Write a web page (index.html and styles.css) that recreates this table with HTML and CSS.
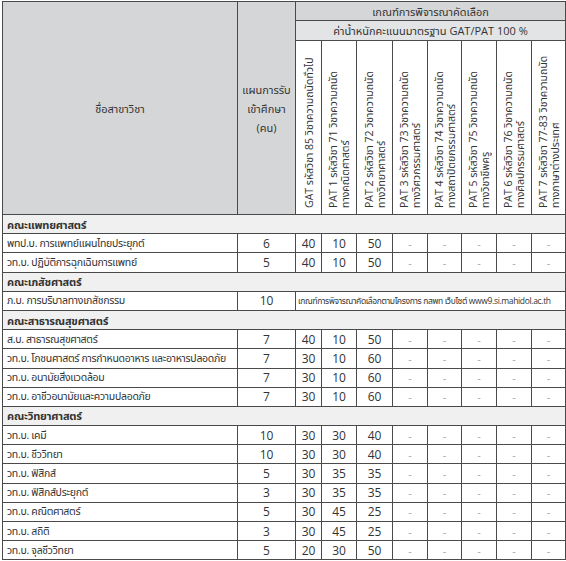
FILE: index.html
```html
<!DOCTYPE html>
<html lang="th">
<head>
<meta charset="utf-8">
<title>เกณฑ์การพิจารณาคัดเลือก</title>
<link rel="stylesheet" href="styles.css">
</head>
<body>
<table class="grid">
  <colgroup>
    <col class="c-name"><col class="c-plan"><col class="c-gat">
    <col class="c-p1"><col class="c-p2"><col class="c-p3"><col class="c-p4">
    <col class="c-p5"><col class="c-p6"><col class="c-p7">
  </colgroup>
  <thead>
    <tr class="h1">
      <th rowspan="3" class="hd">ชื่อสาขาวิชา</th>
      <th rowspan="3" class="hd plan">แผนการรับ<br>เข้าศึกษา<br>(คน)</th>
      <th colspan="8" class="hd">เกณฑ์การพิจารณาคัดเลือก</th>
    </tr>
    <tr class="h2">
      <th colspan="8" class="hd2">ค่าน้ำหนักคะแนนมาตรฐาน GAT/PAT 100 %</th>
    </tr>
    <tr class="h3">
      <th class="vert"><div class="vt">GAT รหัสวิชา 85 วิชาความถนัดทั่วไป</div></th>
      <th class="vert"><div class="vt">PAT 1 รหัสวิชา 71 วิชาความถนัด<br>ทางคณิตศาสตร์</div></th>
      <th class="vert"><div class="vt">PAT 2 รหัสวิชา 72 วิชาความถนัด<br>ทางวิทยาศาสตร์</div></th>
      <th class="vert"><div class="vt">PAT 3 รหัสวิชา 73 วิชาความถนัด<br>ทางวิศวกรรมศาสตร์</div></th>
      <th class="vert"><div class="vt">PAT 4 รหัสวิชา 74 วิชาความถนัด<br>ทางสถาปัตยกรรมศาสตร์</div></th>
      <th class="vert"><div class="vt">PAT 5 รหัสวิชา 75 วิชาความถนัด<br>ทางวิชาชีพครู</div></th>
      <th class="vert"><div class="vt">PAT 6 รหัสวิชา 76 วิชาความถนัด<br>ทางศิลปกรรมศาสตร์</div></th>
      <th class="vert"><div class="vt">PAT 7 รหัสวิชา 77-83 วิชาความถนัด<br>ทางภาษาต่างประเทศ</div></th>
    </tr>
  </thead>
  <tbody>
    <tr class="cat"><td colspan="10">คณะแพทยศาสตร์</td></tr>
    <tr><td class="nm">พทป.บ. การแพทย์แผนไทยประยุกต์</td><td class="n">6</td><td class="n">40</td><td class="n">10</td><td class="n">50</td><td class="d">-</td><td class="d">-</td><td class="d">-</td><td class="d">-</td><td class="d">-</td></tr>
    <tr><td class="nm">วท.บ. ปฏิบัติการฉุกเฉินการแพทย์</td><td class="n">5</td><td class="n">40</td><td class="n">10</td><td class="n">50</td><td class="d">-</td><td class="d">-</td><td class="d">-</td><td class="d">-</td><td class="d">-</td></tr>
    <tr class="cat"><td colspan="10">คณะเภสัชศาสตร์</td></tr>
    <tr><td class="nm">ภ.บ. การบริบาลทางเภสัชกรรม</td><td class="n">10</td><td colspan="8" class="note">เกณฑ์การพิจารณาคัดเลือกตามโครงการ กสพท เว็บไซต์ www9.si.mahidol.ac.th</td></tr>
    <tr class="cat"><td colspan="10">คณะสาธารณสุขศาสตร์</td></tr>
    <tr><td class="nm">ส.บ. สาธารณสุขศาสตร์</td><td class="n">7</td><td class="n">40</td><td class="n">10</td><td class="n">50</td><td class="d">-</td><td class="d">-</td><td class="d">-</td><td class="d">-</td><td class="d">-</td></tr>
    <tr><td class="nm">วท.บ. โภชนศาสตร์ การกำหนดอาหาร และอาหารปลอดภัย</td><td class="n">7</td><td class="n">30</td><td class="n">10</td><td class="n">60</td><td class="d">-</td><td class="d">-</td><td class="d">-</td><td class="d">-</td><td class="d">-</td></tr>
    <tr><td class="nm">วท.บ. อนามัยสิ่งแวดล้อม</td><td class="n">7</td><td class="n">30</td><td class="n">10</td><td class="n">60</td><td class="d">-</td><td class="d">-</td><td class="d">-</td><td class="d">-</td><td class="d">-</td></tr>
    <tr><td class="nm">วท.บ. อาชีวอนามัยและความปลอดภัย</td><td class="n">7</td><td class="n">30</td><td class="n">10</td><td class="n">60</td><td class="d">-</td><td class="d">-</td><td class="d">-</td><td class="d">-</td><td class="d">-</td></tr>
    <tr class="cat"><td colspan="10">คณะวิทยาศาสตร์</td></tr>
    <tr><td class="nm">วท.บ. เคมี</td><td class="n">10</td><td class="n">30</td><td class="n">30</td><td class="n">40</td><td class="d">-</td><td class="d">-</td><td class="d">-</td><td class="d">-</td><td class="d">-</td></tr>
    <tr><td class="nm">วท.บ. ชีววิทยา</td><td class="n">10</td><td class="n">30</td><td class="n">30</td><td class="n">40</td><td class="d">-</td><td class="d">-</td><td class="d">-</td><td class="d">-</td><td class="d">-</td></tr>
    <tr><td class="nm">วท.บ. ฟิสิกส์</td><td class="n">5</td><td class="n">30</td><td class="n">35</td><td class="n">35</td><td class="d">-</td><td class="d">-</td><td class="d">-</td><td class="d">-</td><td class="d">-</td></tr>
    <tr><td class="nm">วท.บ. ฟิสิกส์ประยุกต์</td><td class="n">3</td><td class="n">30</td><td class="n">35</td><td class="n">35</td><td class="d">-</td><td class="d">-</td><td class="d">-</td><td class="d">-</td><td class="d">-</td></tr>
    <tr><td class="nm">วท.บ. คณิตศาสตร์</td><td class="n">5</td><td class="n">30</td><td class="n">45</td><td class="n">25</td><td class="d">-</td><td class="d">-</td><td class="d">-</td><td class="d">-</td><td class="d">-</td></tr>
    <tr><td class="nm">วท.บ. สถิติ</td><td class="n">3</td><td class="n">30</td><td class="n">45</td><td class="n">25</td><td class="d">-</td><td class="d">-</td><td class="d">-</td><td class="d">-</td><td class="d">-</td></tr>
    <tr><td class="nm">วท.บ. จุลชีววิทยา</td><td class="n">5</td><td class="n">20</td><td class="n">30</td><td class="n">50</td><td class="d">-</td><td class="d">-</td><td class="d">-</td><td class="d">-</td><td class="d">-</td></tr>
  </tbody>
</table>
</body>
</html>
```

FILE: styles.css
```css
html, body {
  margin: 0;
  padding: 0;
  background: #ffffff;
}

body {
  padding: 1px 0 0 2px;
  font-family: "Open Sans", "Noto Sans Thai", "Noto Sans", "DejaVu Sans", sans-serif;
  font-size: 11px;
  color: #333333;
}

.grid {
  border-collapse: collapse;
  table-layout: fixed;
  width: 563px;
}

.grid th,
.grid td {
  border: 1px solid #4a4a4a;
  padding: 0;
  font-weight: normal;
  white-space: nowrap;
  overflow: hidden;
  line-height: 17px;
}

.c-name { width: 235px; }
.c-plan { width: 58px; }
.c-gat { width: 26px; }
.c-p1 { width: 35px; }
.c-p2 { width: 36px; }
.c-p3 { width: 35px; }
.c-p4 { width: 34px; }
.c-p5 { width: 35px; }
.c-p6 { width: 35px; }
.c-p7 { width: 34px; }

.grid .hd {
  background: #d5d6d8;
  text-align: center;
  vertical-align: middle;
}

.grid .plan {
  line-height: 19px;
}

.h1 { height: 19px; }
.h2 { height: 20px; }
.h3 { height: 174px; }

.grid .hd2 {
  background: #e3e4e6;
  text-align: center;
}

.grid .vert {
  background: #ffffff;
  vertical-align: bottom;
}

.vt {
  writing-mode: vertical-rl;
  transform: rotate(180deg);
  height: 166px;
  margin: 0 auto;
  padding-top: 6px;
  line-height: 12px;
  font-size: 10.5px;
  text-align: left;
  white-space: nowrap;
}

tbody tr { height: 19.2px; }

.grid .cat td {
  background: #f0f0f0;
  font-weight: bold;
  padding-left: 4px;
  letter-spacing: -0.2px;
}

.grid .nm {
  padding-left: 4px;
  font-size: 10.5px;
  letter-spacing: -0.3px;
}

.grid .n {
  text-align: center;
  font-size: 12px;
}

.grid .d {
  text-align: center;
  color: #a8a8a8;
}

.grid .note {
  font-size: 8.5px;
  padding-left: 2px;
  letter-spacing: -0.35px;
}
```
